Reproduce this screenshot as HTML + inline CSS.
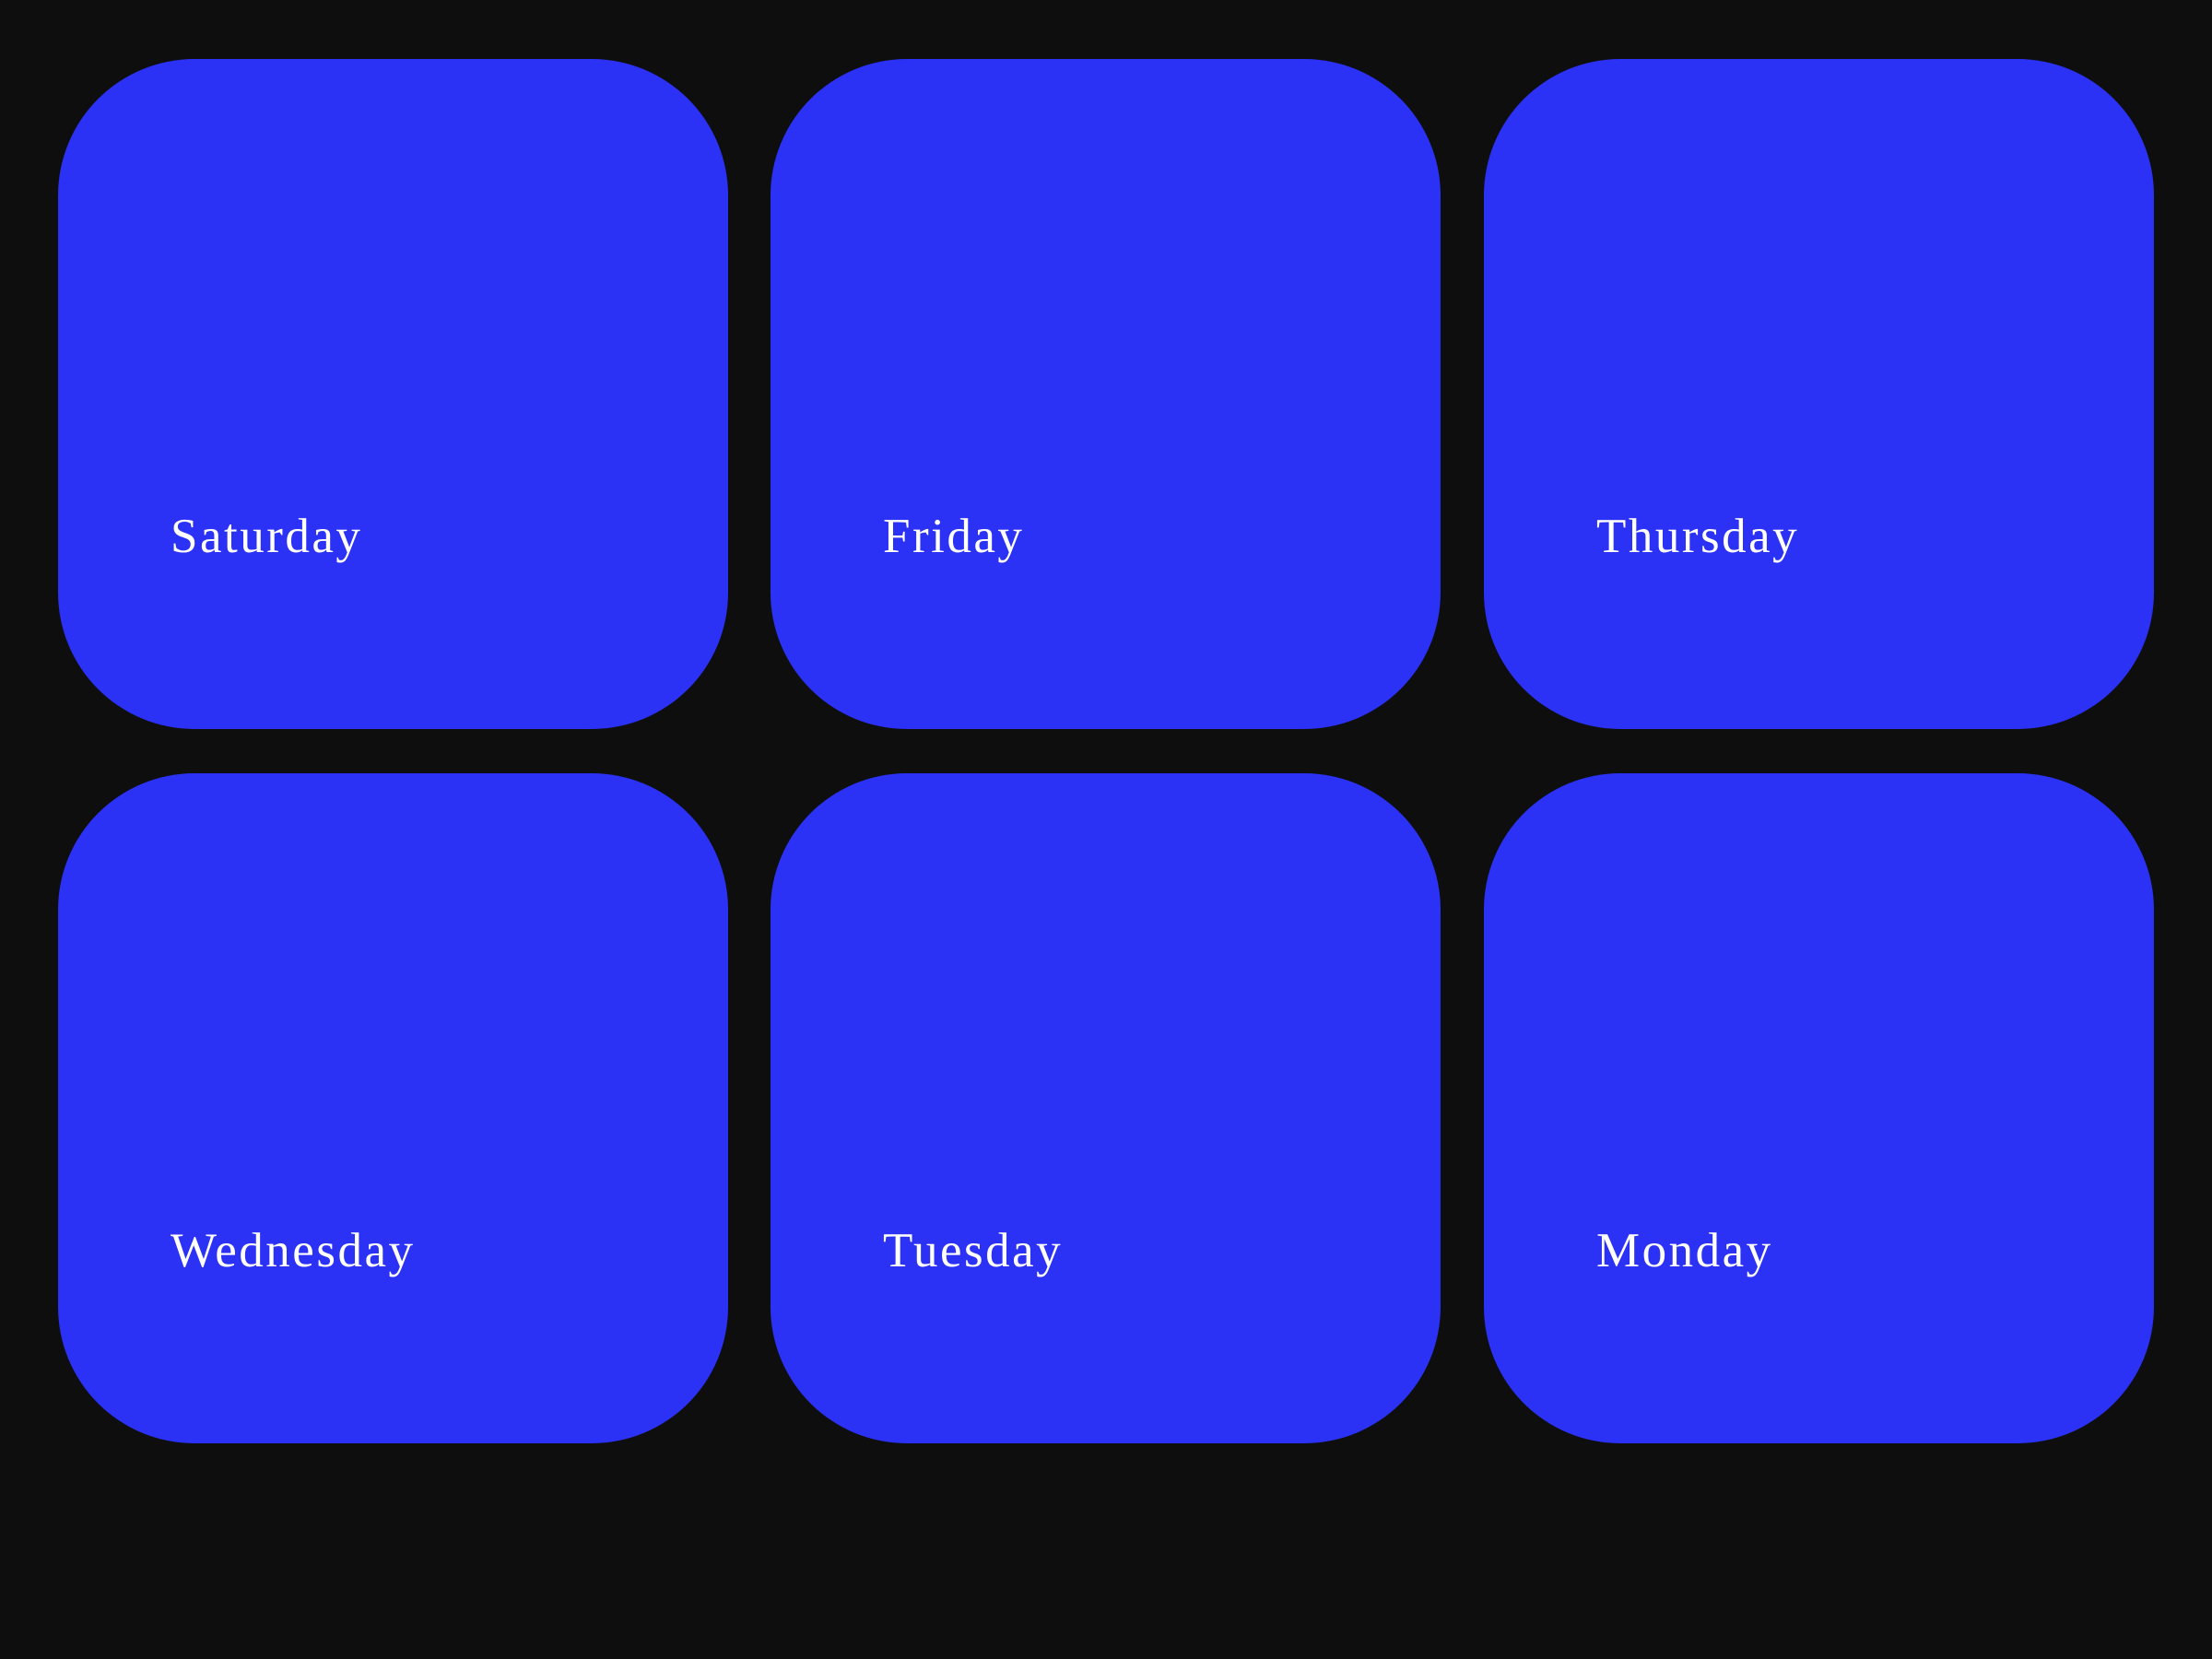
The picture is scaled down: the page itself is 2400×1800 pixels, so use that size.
<!DOCTYPE html>
<html><head><meta charset="utf-8"><style>
html,body{margin:0;padding:0;background:#0e0e0e;width:2400px;height:1800px;overflow:hidden}
.c{position:absolute;width:727px;height:727px;background:#2b32f5;border-radius:148px}
.c span{position:absolute;left:122px;top:492px;font-family:"Liberation Serif",serif;font-size:53px;letter-spacing:2.5px;color:#fff;line-height:1}
</style></head><body>
<div class="c" style="left:63px;top:64px"><span>Saturday</span></div>
<div class="c" style="left:836px;top:64px"><span>Friday</span></div>
<div class="c" style="left:1610px;top:64px"><span>Thursday</span></div>
<div class="c" style="left:63px;top:839px"><span>Wednesday</span></div>
<div class="c" style="left:836px;top:839px"><span>Tuesday</span></div>
<div class="c" style="left:1610px;top:839px"><span>Monday</span></div>
</body></html>
